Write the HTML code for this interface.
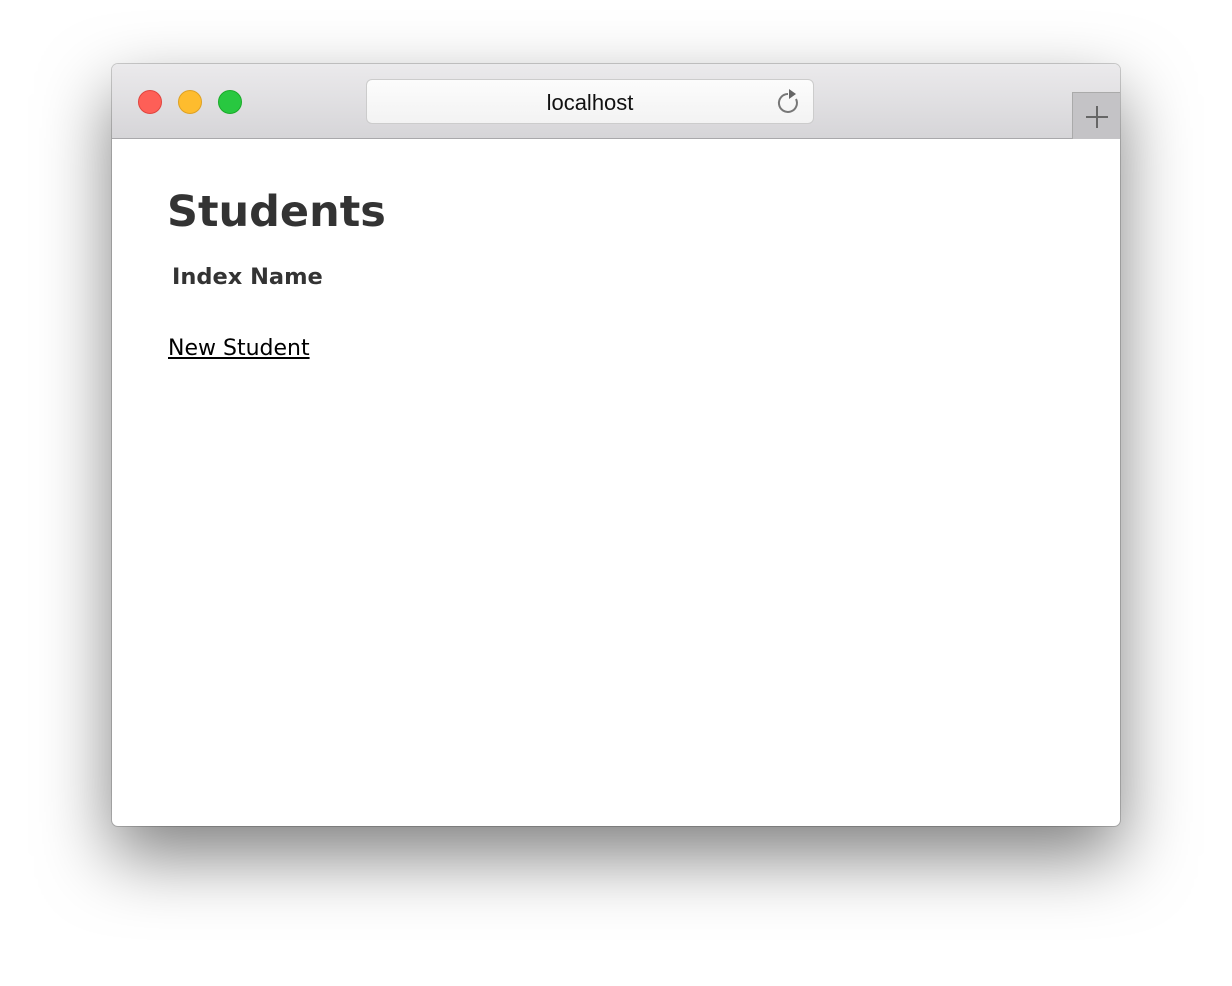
<!DOCTYPE html>
<html><head><style>
html,body{margin:0;padding:0;background:#fff;width:1232px;height:986px;overflow:hidden}
.win{position:absolute;left:112px;top:64px;width:1008px;height:762px;border-radius:6px;background:#fff;box-shadow:0 30px 70px rgba(0,0,0,.5),0 0 0 1px rgba(0,0,0,.18);overflow:hidden}
.bar{position:absolute;left:0;top:0;width:100%;height:74px;background:linear-gradient(#ebeaec,#d6d5d8);border-bottom:1px solid #a9a8ab}
.dot{position:absolute;top:26px;width:24px;height:24px;border-radius:50%;box-sizing:border-box}
.url{position:absolute;left:254px;top:15px;width:448px;height:45px;border-radius:6px;background:linear-gradient(#fcfcfc,#f3f3f3);border:1px solid #ccc;box-sizing:border-box;font:22px "Liberation Sans",sans-serif;text-align:center;line-height:45px;color:#111}
.plus{position:absolute;left:960px;top:28px;width:48px;height:47px;background:#c4c3c6;border-left:1px solid #aaa;border-top:1px solid #aaa;box-sizing:border-box}
.c{position:absolute;font-family:"DejaVu Sans",sans-serif;color:#333}
</style></head><body>
<div class="win">
 <div class="bar">
  <div class="dot" style="left:26px;background:#fe5f57;border:1px solid #e0443e"></div>
  <div class="dot" style="left:66px;background:#febc2e;border:1px solid #dea123"></div>
  <div class="dot" style="left:106px;background:#28c840;border:1px solid #1aab29"></div>
  <div class="url">localhost
   <svg style="position:absolute;right:12px;top:9px" width="26" height="26" viewBox="0 0 26 26"><path d="M13 5 A9 9 0 1 0 21 10" fill="none" stroke="#777" stroke-width="2"/><path d="M14 0 L21 5 L14 10 Z" fill="#666"/></svg>
  </div>
  <div class="plus"><svg width="48" height="46"><path d="M24 13V35M13 24H35" stroke="#666" stroke-width="2"/></svg></div>
 </div>
 <div class="c" style="left:55px;top:123px;font-size:43px;font-weight:bold">Students</div>
 <div class="c" style="left:60px;top:200px;font-size:22.5px;font-weight:bold">Index Name</div>
 <div class="c" style="left:56px;top:272px;font-size:22px;color:#000;text-decoration:underline">New Student</div>
</div>
</body></html>
